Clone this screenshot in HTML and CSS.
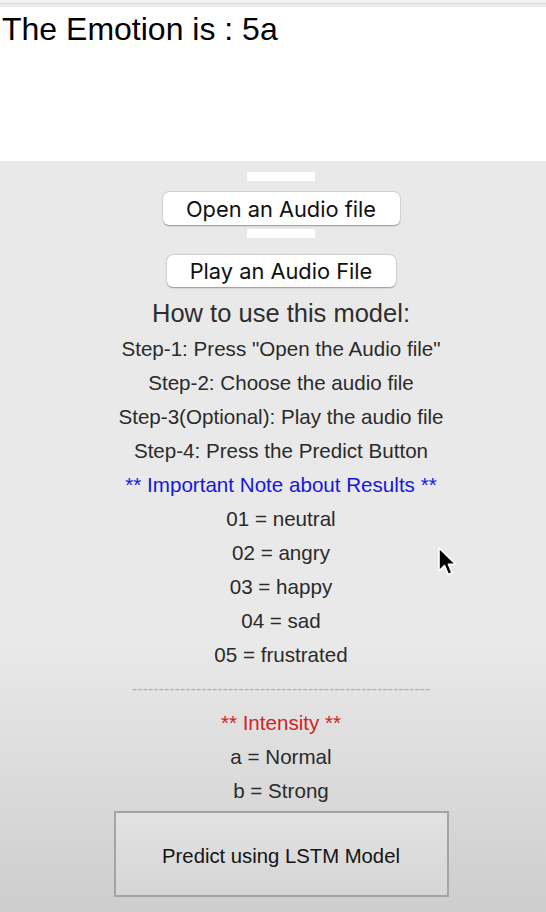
FILE: index.html
```html
<!DOCTYPE html>
<html lang="en">
<head>
<meta charset="utf-8">
<title>Emotion Recognition</title>
<link rel="stylesheet" href="styles.css">
</head>
<body>
<div class="app">
  <div class="topbar"></div>
  <header class="result">
    <h1 class="result-text">The Emotion is : 5a</h1>
  </header>
  <main class="panel">
    <div class="spacer-bar"></div>
    <button class="mac-btn btn-open">Open an Audio file</button>
    <div class="spacer-bar spacer-bar-2"></div>
    <button class="mac-btn btn-play">Play an Audio File</button>
    <h2 class="heading">How to use this model:</h2>
    <ul class="rows">
      <li class="row">Step-1: Press "Open the Audio file"</li>
      <li class="row">Step-2: Choose the audio file</li>
      <li class="row">Step-3(Optional): Play the audio file</li>
      <li class="row">Step-4: Press the Predict Button</li>
      <li class="row note">** Important Note about Results **</li>
      <li class="row">01 = neutral</li>
      <li class="row">02 = angry</li>
      <li class="row">03 = happy</li>
      <li class="row">04 = sad</li>
      <li class="row">05 = frustrated</li>
      <li class="row dashes">--------------------------------------------------------</li>
      <li class="row intensity">** Intensity **</li>
      <li class="row">a = Normal</li>
      <li class="row">b = Strong</li>
    </ul>
    <button class="predict-btn">Predict using LSTM Model</button>
  </main>
  <svg class="cursor" width="20" height="32" viewBox="0 0 20 32" aria-hidden="true">
    <path d="M2 1 L2 24 L7.5 18.6 L11.2 27.4 L15 25.8 L11.4 17.2 L18.6 17.2 Z" fill="#000" stroke="#fff" stroke-width="1.6" stroke-linejoin="round"/>
  </svg>
</div>
</body>
</html>
```

FILE: styles.css
```css
* {
  box-sizing: border-box;
}

html, body {
  margin: 0;
  padding: 0;
}

body {
  width: 546px;
  height: 912px;
  overflow: hidden;
  font-family: "Liberation Sans", Arial, sans-serif;
  background: #e9e9e9;
}

.app {
  position: relative;
  width: 546px;
  height: 912px;
  display: flex;
  flex-direction: column;
}

.topbar {
  height: 7px;
  background: linear-gradient(to bottom, #f3f3f3 0, #f3f3f3 3px, #d9d9d9 3px, #d9d9d9 4px, #ebebeb 4px, #ebebeb 7px);
}

.result {
  height: 154px;
  background: #ffffff;
  padding: 4px 0 0 2px;
}

.result-text {
  margin: 0;
  font-weight: normal;
  font-size: 32px;
  line-height: 36px;
  color: #000;
}

.panel {
  flex: 1;
  display: flex;
  flex-direction: column;
  align-items: center;
  padding-left: 16px;
  background: linear-gradient(to bottom, #e9e9e9 0, #e9e9e9 480px, #cdcdcd 100%);
}

.spacer-bar {
  width: 68px;
  height: 9px;
  margin-top: 11px;
  background: #ffffff;
}

.spacer-bar-2 {
  margin-top: 4px;
}

.mac-btn {
  margin-top: 11px;
  height: 33px;
  padding: 0;
  border: none;
  border-radius: 6px;
  background: #ffffff;
  box-shadow: 0 0.5px 1.5px rgba(0, 0, 0, 0.35), 0 0 0 0.5px rgba(0, 0, 0, 0.06);
  font-family: Inter, "Liberation Sans", sans-serif;
  font-size: 21.8px;
  color: #111;
  text-align: center;
}

.btn-open {
  width: 237px;
}

.btn-play {
  width: 229px;
  height: 32px;
  margin-top: 17px;
}

.heading {
  margin: 8px 0 0;
  font-weight: normal;
  font-size: 25.5px;
  line-height: 36px;
  color: #2e2e2e;
}

.rows {
  list-style: none;
  margin: 1px 0 0;
  padding: 0;
  display: flex;
  flex-direction: column;
  align-items: center;
}

.row {
  font-size: 20.6px;
  line-height: 34px;
  height: 34px;
  color: #2b2b2b;
  white-space: nowrap;
}

.note {
  color: #1616e0;
}

.intensity {
  color: #d4231c;
}

.dashes {
  font-size: 16px;
  color: #b2b2b2;
}

.predict-btn {
  margin-top: 3px;
  width: 335px;
  height: 86px;
  border: 2px solid #a4a4a4;
  background: linear-gradient(to bottom, #e2e2e2, #d6d6d6);
  font-family: "Liberation Sans", Arial, sans-serif;
  font-size: 20.3px;
  color: #141414;
  padding: 4px 0 0;
}

.cursor {
  position: absolute;
  left: 437px;
  top: 547px;
}
```
